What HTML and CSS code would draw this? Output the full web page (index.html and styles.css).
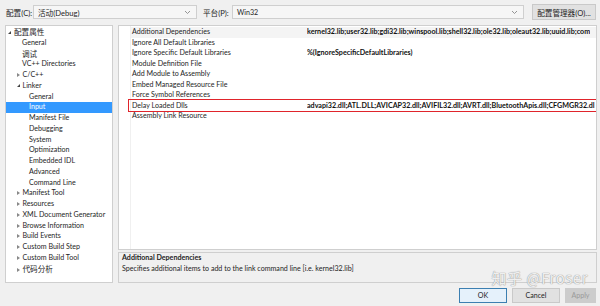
FILE: index.html
```html
<!DOCTYPE html>
<html>
<head>
<meta charset="utf-8">
<link rel="stylesheet" href="styles.css">
</head>
<body>
<div class="dialog">
  <div class="topbar">
    <span class="lbl cjk">配置(C):</span>
    <div class="combo combo-cfg"><span class="cjk">活动(Debug)</span><svg class="chev" width="7" height="5" viewBox="0 0 7 5"><path d="M1 1 L3.5 3.5 L6 1" fill="none" stroke="#8a8a8a" stroke-width="0.9"/></svg></div>
    <span class="lbl lbl2 cjk">平台(P):</span>
    <div class="combo combo-plat"><span>Win32</span><svg class="chev" width="7" height="5" viewBox="0 0 7 5"><path d="M1 1 L3.5 3.5 L6 1" fill="none" stroke="#8a8a8a" stroke-width="0.9"/></svg></div>
    <div class="btn btn-mgr cjk">配置管理器(O)...</div>
  </div>
  <div class="main">
    <div class="tree">
      <div class="node l0"><span class="arr open"></span><span class="cjk">配置属性</span></div>
      <div class="node l1">General</div>
      <div class="node l1"><span class="cjk">调试</span></div>
      <div class="node l1">VC++ Directories</div>
      <div class="node hasarr"><span class="arr closed"></span>C/C++</div>
      <div class="node hasarr"><span class="arr open"></span>Linker</div>
      <div class="node l2">General</div>
      <div class="node l2 sel">Input</div>
      <div class="node l2">Manifest File</div>
      <div class="node l2">Debugging</div>
      <div class="node l2">System</div>
      <div class="node l2">Optimization</div>
      <div class="node l2">Embedded IDL</div>
      <div class="node l2">Advanced</div>
      <div class="node l2">Command Line</div>
      <div class="node hasarr"><span class="arr closed"></span>Manifest Tool</div>
      <div class="node hasarr"><span class="arr closed"></span>Resources</div>
      <div class="node hasarr"><span class="arr closed"></span>XML Document Generator</div>
      <div class="node hasarr"><span class="arr closed"></span>Browse Information</div>
      <div class="node hasarr"><span class="arr closed"></span>Build Events</div>
      <div class="node hasarr"><span class="arr closed"></span>Custom Build Step</div>
      <div class="node hasarr"><span class="arr closed"></span>Custom Build Tool</div>
      <div class="node hasarr"><span class="arr closed"></span><span class="cjk">代码分析</span></div>
    </div>
    <div class="right">
      <div class="grid">
        <div class="row cur"><div class="name">Additional Dependencies</div><div class="val">kernel32.lib;user32.lib;gdi32.lib;winspool.lib;shell32.lib;ole32.lib;oleaut32.lib;uuid.lib;com</div></div>
        <div class="row"><div class="name">Ignore All Default Libraries</div><div class="val"></div></div>
        <div class="row"><div class="name">Ignore Specific Default Libraries</div><div class="val">%(IgnoreSpecificDefaultLibraries)</div></div>
        <div class="row"><div class="name">Module Definition File</div><div class="val"></div></div>
        <div class="row"><div class="name">Add Module to Assembly</div><div class="val"></div></div>
        <div class="row"><div class="name">Embed Managed Resource File</div><div class="val"></div></div>
        <div class="row"><div class="name">Force Symbol References</div><div class="val"></div></div>
        <div class="row"><div class="name">Delay Loaded Dlls</div><div class="val">advapi32.dll;ATL.DLL;AVICAP32.dll;AVIFIL32.dll;AVRT.dll;BluetoothApis.dll;CFGMGR32.dl</div></div>
        <div class="row"><div class="name">Assembly Link Resource</div><div class="val"></div></div>
        <div class="redbox"></div>
      </div>
      <div class="desc">
        <div class="dtitle">Additional Dependencies</div>
        <div class="dtext">Specifies additional items to add to the link command line [i.e. kernel32.lib]</div>
      </div>
    </div>
  </div>
  <div class="bottom">
    <div class="btn btn-ok">OK</div>
    <div class="btn">Cancel</div>
    <div class="btn btn-dis">Apply</div>
    <div class="watermark">知乎 @Froser</div>
  </div>
</div>
</body>
</html>
```
FILE: styles.css
```css
html, body {
  margin: 0;
  padding: 0;
}
body {
  width: 600px;
  height: 306px;
  overflow: hidden;
  background: #f0f0f0;
  font-family: "Lato", "Noto Sans CJK SC", sans-serif;
  font-size: 7.1px;
  color: #1e1e1e;
}
.cjk {
  font-size: 7.6px;
}
.dialog {
  position: relative;
  width: 600px;
  height: 306px;
}
.topbar {
  display: flex;
  align-items: center;
  height: 16px;
  padding: 4px 0 0 6px;
}
.lbl {
  width: 27px;
  white-space: nowrap;
}
.lbl2 {
  margin-left: 6px;
  width: 29px;
}
.combo {
  position: relative;
  height: 14px;
  box-sizing: border-box;
  border: 1px solid #cfcfcf;
  background: #f6f6f6;
  display: flex;
  align-items: center;
  padding-left: 4px;
}
.combo-cfg { width: 164px; }
.combo-plat { width: 292px; }
.chev {
  position: absolute;
  right: 5px;
  top: 4px;
}
.btn {
  height: 15px;
  box-sizing: border-box;
  border: 1px solid #c9c9c9;
  background: #e1e1e1;
  display: flex;
  align-items: center;
  justify-content: center;
  width: 48px;
}
.btn-mgr {
  margin-left: 8px;
  width: 64px;
  height: 16px;
}
.main {
  display: flex;
  gap: 5px;
  padding: 5px 3px 0 5px;
  height: 258px;
}
.tree {
  flex: none;
  width: 108px;
  box-sizing: border-box;
  border: 1px solid #cfcfcf;
  background: #fff;
  padding-top: 1px;
}
.node {
  position: relative;
  height: 10.75px;
  line-height: 10.75px;
  white-space: nowrap;
}
.l0 { padding-left: 2px; }
.l1 { padding-left: 16px; }
.l2 { padding-left: 23px; }
.hasarr { padding-left: 10.5px; }
.arr {
  display: inline-block;
  width: 6px;
  vertical-align: middle;
}
.arr.open::before {
  content: "";
  display: block;
  width: 0;
  height: 0;
  border-left: 3px solid transparent;
  border-bottom: 3px solid #444;
  margin-top: -1px;
}
.arr.closed::before {
  content: "";
  display: block;
  width: 0;
  height: 0;
  border-top: 2.5px solid transparent;
  border-bottom: 2.5px solid transparent;
  border-left: 3px solid #888;
}
.sel {
  background: #3399ff;
  color: #fff;
}
.right {
  flex: 1;
  min-width: 0;
  display: flex;
  flex-direction: column;
  gap: 2px;
}
.grid {
  position: relative;
  height: 225px;
  box-sizing: border-box;
  border: 1px solid #cfcfcf;
  background: #fff;
  padding-top: 1px;
  padding-left: 12px;
  overflow: hidden;
}
.grid::before {
  content: "";
  position: absolute;
  left: 11px;
  top: 0;
  bottom: 0;
  width: 1px;
  background: #f0f0f0;
}
.row {
  display: flex;
  height: 10.5px;
  line-height: 10.5px;
  white-space: nowrap;
}
.row.cur {
  background: #f4f4f4;
}
.name {
  width: 175px;
  flex: none;
  padding-left: 1px;
  overflow: hidden;
}
.val {
  font-weight: bold;
  font-size: 7.15px;
  color: #111;
  overflow: hidden;
}
.redbox {
  position: absolute;
  left: 9px;
  top: 73px;
  width: 470px;
  height: 13px;
  box-sizing: border-box;
  border: 1px solid #e0242b;
}
.desc {
  height: 31px;
  box-sizing: border-box;
  border: 1px solid #cfcfcf;
  background: #f0f0f0;
  padding: 0 0 0 3px;
  line-height: 10.5px;
}
.dtitle {
  font-weight: bold;
}
.bottom {
  position: relative;
  display: flex;
  justify-content: flex-end;
  gap: 5px;
  padding: 5px 4px 0 0;
}
.btn-ok {
  border-color: #3c7fb1;
  background: #e5f1fb;
}
.btn-dis {
  width: 31px;
  color: #9a9a9a;
  background: #cccccc;
  border-color: #cccccc;
}
.watermark {
  position: absolute;
  right: 12px;
  top: -16px;
  font-family: "Noto Sans CJK SC", sans-serif;
  font-size: 15px;
  color: rgba(255, 255, 255, 0.85);
  text-shadow: 0 0 1px #9a9a9a, 0 0 1px #9a9a9a;
  letter-spacing: 0.5px;
  white-space: nowrap;
}
```
